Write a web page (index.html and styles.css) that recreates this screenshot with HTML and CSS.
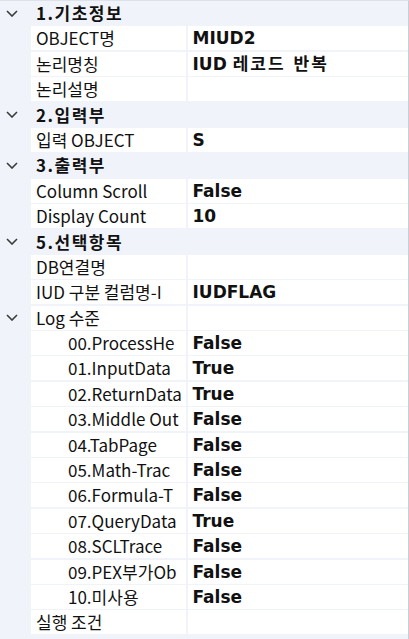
FILE: index.html
```html
<!DOCTYPE html>
<html>
<head>
  <title>Property Grid</title>
  <link rel="stylesheet" href="styles.css">
</head>
<body>
  <div class="grid">
    <div class="row group"><span class="gutter"><svg class="chev" width="12" height="7" viewBox="0 0 12 7"><polyline points="1,1 6,6 11,1"/></svg></span><span class="label">1.기초정보</span></div>
    <div class="row"><span class="gutter"></span><span class="name">OBJECT명</span><span class="value">MIUD2</span></div>
    <div class="row"><span class="gutter"></span><span class="name">논리명칭</span><span class="value">IUD <span class="ko">레코드 반복</span></span></div>
    <div class="row"><span class="gutter"></span><span class="name">논리설명</span><span class="value"></span></div>

    <div class="row group"><span class="gutter"><svg class="chev" width="12" height="7" viewBox="0 0 12 7"><polyline points="1,1 6,6 11,1"/></svg></span><span class="label">2.입력부</span></div>
    <div class="row"><span class="gutter"></span><span class="name">입력 OBJECT</span><span class="value">S</span></div>

    <div class="row group"><span class="gutter"><svg class="chev" width="12" height="7" viewBox="0 0 12 7"><polyline points="1,1 6,6 11,1"/></svg></span><span class="label">3.출력부</span></div>
    <div class="row"><span class="gutter"></span><span class="name">Column Scroll</span><span class="value">False</span></div>
    <div class="row"><span class="gutter"></span><span class="name">Display Count</span><span class="value">10</span></div>

    <div class="row group"><span class="gutter"><svg class="chev" width="12" height="7" viewBox="0 0 12 7"><polyline points="1,1 6,6 11,1"/></svg></span><span class="label">5.선택항목</span></div>
    <div class="row"><span class="gutter"></span><span class="name">DB연결명</span><span class="value"></span></div>
    <div class="row"><span class="gutter"></span><span class="name">IUD 구분 컬럼명-I</span><span class="value">IUDFLAG</span></div>
    <div class="row"><span class="gutter"><svg class="chev" width="12" height="7" viewBox="0 0 12 7"><polyline points="1,1 6,6 11,1"/></svg></span><span class="name">Log 수준</span><span class="value"></span></div>
    <div class="row sub"><span class="gutter"></span><span class="name">00.ProcessHe</span><span class="value">False</span></div>
    <div class="row sub"><span class="gutter"></span><span class="name">01.InputData</span><span class="value">True</span></div>
    <div class="row sub"><span class="gutter"></span><span class="name">02.ReturnData</span><span class="value">True</span></div>
    <div class="row sub"><span class="gutter"></span><span class="name">03.Middle Out</span><span class="value">False</span></div>
    <div class="row sub"><span class="gutter"></span><span class="name">04.TabPage</span><span class="value">False</span></div>
    <div class="row sub"><span class="gutter"></span><span class="name">05.Math-Trac</span><span class="value">False</span></div>
    <div class="row sub"><span class="gutter"></span><span class="name">06.Formula-T</span><span class="value">False</span></div>
    <div class="row sub"><span class="gutter"></span><span class="name">07.QueryData</span><span class="value">True</span></div>
    <div class="row sub"><span class="gutter"></span><span class="name">08.SCLTrace</span><span class="value">False</span></div>
    <div class="row sub"><span class="gutter"></span><span class="name">09.PEX부가Ob</span><span class="value">False</span></div>
    <div class="row sub"><span class="gutter"></span><span class="name">10.미사용</span><span class="value">False</span></div>
    <div class="row"><span class="gutter"></span><span class="name">실행 조건</span><span class="value"></span></div>
  </div>
</body>
</html>
```

FILE: styles.css
```css
body {
  margin: 0;
  padding: 0;
  background: #f0f4fa;
  font-family: "Noto Sans CJK KR", "Liberation Sans", sans-serif;
  font-size: 17px;
  color: #111;
}

.grid {
  width: 408px;
  height: 638px;
  border-top: 1px solid #dde2ea;
  border-right: 1px solid #c9ced6;
  background: #f0f4fa;
  overflow: hidden;
}

.row {
  display: flex;
  height: 24px;
  line-height: 24px;
  margin-bottom: 1.4px;
}

.gutter {
  width: 31px;
  flex: none;
  display: flex;
  align-items: center;
}

.chev {
  margin-left: 6px;
}

.chev polyline {
  fill: none;
  stroke: #3a3a3a;
  stroke-width: 1.6;
}

.label {
  padding-left: 5px;
  font-weight: bold;
  letter-spacing: 1.5px;
}

.name {
  width: 150px;
  flex: none;
  padding-left: 5px;
  background: #fff;
  white-space: nowrap;
  overflow: hidden;
}

.sub .name {
  width: 118px;
  padding-left: 37px;
}

.value {
  flex: 1;
  margin-left: 1.5px;
  padding-left: 5px;
  background: #fff;
  font-family: "DejaVu Sans", "Noto Sans CJK KR", sans-serif;
  font-weight: bold;
  white-space: nowrap;
  overflow: hidden;
}

.value .ko {
  letter-spacing: 2px;
}
```
